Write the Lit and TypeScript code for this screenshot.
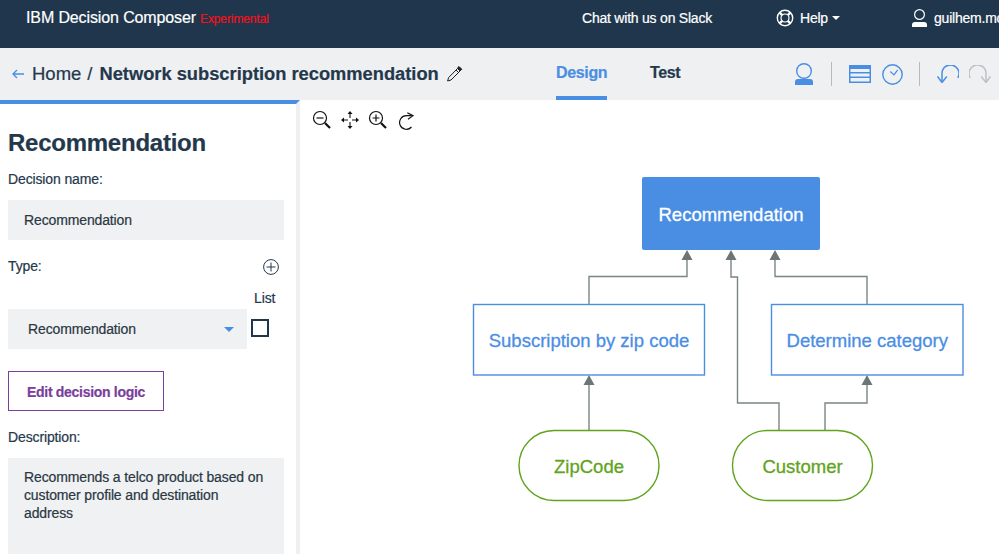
import { LitElement, css, html, svg } from "lit";
import { customElement } from "lit/decorators.js";

const BLUE = "#4a8ee4";
const GREEN = "#5fa41c";

const edges = [
  "M589 304V276.5H687V259",
  "M779 430V403H737.5V277H731V259",
  "M825 430V403H867V385",
  "M867 304V276.5H775V259",
  "M589 430V385",
];
const arrows = [
  [687, 250],
  [731, 250],
  [775, 250],
  [867, 375],
  [589, 375],
];
const boxes = [
  { x: 473.5, y: 304.5, w: 231, h: 70.5, label: "Subscription by zip code" },
  { x: 771.5, y: 304.5, w: 191.5, h: 70.5, label: "Determine category" },
];
const pills = [
  { x: 519, y: 430.5, label: "ZipCode" },
  { x: 732.5, y: 430.5, label: "Customer" },
];

@customElement("app-root")
export class AppRoot extends LitElement {
  private diagram() {
    return svg`
      ${edges.map((d) => svg`<path class="edge" d=${d}></path>`)}
      ${arrows.map(
        ([x, y]) => svg`<path class="head" d="M${x} ${y}l5.5 10h-11z"></path>`
      )}
      <rect x="642" y="177" width="178" height="73" rx="2" fill=${BLUE}></rect>
      <text class="label" x="731" y="220.5" text-anchor="middle" fill="#fff" stroke="#fff">Recommendation</text>
      ${boxes.map(
        (b) => svg`
          <rect class="box" x=${b.x} y=${b.y} width=${b.w} height=${b.h}></rect>
          <text class="label" x=${b.x + b.w / 2} y="346.5" text-anchor="middle" fill=${BLUE} stroke=${BLUE}>${b.label}</text>
        `
      )}
      ${pills.map(
        (p) => svg`
          <rect class="pill" x=${p.x} y=${p.y} width="140" height="70" rx="35"></rect>
          <text class="label" x=${p.x + 70} y="472.5" text-anchor="middle" fill=${GREEN} stroke=${GREEN}>${p.label}</text>
        `
      )}
    `;
  }

  render() {
    return html`
      <header class="topbar">
        <div class="brand">
          <span class="name">IBM Decision Composer</span>
          <span class="exp">Experimental</span>
        </div>
        <div class="top-item">Chat with us on Slack</div>
        <div class="top-item help">
          <svg width="18" height="18" viewBox="0 0 18 18" fill="none" stroke="#fff">
            <circle cx="9" cy="9" r="7.7" stroke-width="1.4"></circle>
            <circle cx="9" cy="9" r="4" stroke-width="1.2"></circle>
            <path d="M3.6 3.6l2.6 2.6M14.4 3.6l-2.6 2.6M3.6 14.4l2.6-2.6M14.4 14.4l-2.6-2.6" stroke-width="2.4"></path>
          </svg>
          <span>Help</span>
          <i class="caret"></i>
        </div>
        <div class="top-item user">
          <svg width="15" height="18" viewBox="0 0 15 18">
            <circle cx="7.5" cy="5.5" r="4.9" fill="none" stroke="#fff" stroke-width="1.2"></circle>
            <path d="M0 18v-2q0-3 3-3h9q3 0 3 3v2z" fill="#fff"></path>
          </svg>
          <span>guilhem.molines</span>
        </div>
      </header>

      <nav class="subbar">
        <div class="crumbs">
          <svg class="back" width="12" height="10" viewBox="0 0 12 10" fill="none" stroke=${BLUE} stroke-width="1.3">
            <path d="M12 5H1M5 1L1 5l4 4"></path>
          </svg>
          <span class="home">Home</span>
          <span class="slash">/</span>
          <b>Network subscription recommendation</b>
          <svg class="pencil" width="18" height="18" viewBox="0 0 18 18" fill="none" stroke="#1f1f1f" stroke-width="1">
            <path d="M12.5 3.5l2.5 2.5L6 15l-3.4 1 1-3.4z"></path>
            <path d="M11 5l2.5 2.5"></path>
            <path d="M14 1.5l2.8 2.8-1.5 1.4-2.8-2.8z" fill="#1f1f1f"></path>
          </svg>
        </div>
        <div class="tab active">Design</div>
        <div class="tab">Test</div>
        <div class="tools">
          <svg width="18" height="22" viewBox="0 0 18 22">
            <circle cx="9" cy="8" r="7.3" fill="none" stroke=${BLUE} stroke-width="1.4"></circle>
            <path d="M0 22v-3q0-3 3-3h12q3 0 3 3v3z" fill=${BLUE}></path>
          </svg>
          <i class="sep first"></i>
          <svg class="table" width="22" height="18" viewBox="0 0 22 18">
            <path d="M0 0h22v18H0z" fill=${BLUE}></path>
            <path d="M1.5 4h19v3h-19zM1.5 8.5h19v3h-19zM1.5 13h19v3.5h-19z" fill="#eff0f2"></path>
          </svg>
          <svg class="clock" width="21" height="21" viewBox="0 0 21 21" fill="none" stroke=${BLUE}>
            <circle cx="10.5" cy="10.5" r="9.7" stroke-width="1.4"></circle>
            <path d="M8.3 7.5l3.7 3.4 3.7-5" stroke-width="1.2"></path>
          </svg>
          <i class="sep second"></i>
          <svg class="undo" width="22" height="18" viewBox="0 0 22 18" fill="none" stroke=${BLUE} stroke-width="1.5">
            <path d="M20.8 12.8A8.5 8.5 0 1 0 5 8.5V17"></path>
            <path d="M.5 11.5l4.5 6 4.8-6"></path>
          </svg>
          <svg class="redo" width="22" height="18" viewBox="0 0 22 18" fill="none" stroke="#b9c3c3" stroke-width="1.5">
            <path d="M1.2 12.8A8.5 8.5 0 1 1 17 8.5V17"></path>
            <path d="M21.5 11.5l-4.5 6-4.8-6"></path>
          </svg>
        </div>
      </nav>

      <main class="main">
        <aside class="side">
          <h1>Recommendation</h1>
          <label class="name-label">Decision name:</label>
          <div class="field name-field">Recommendation</div>
          <div class="type-row">
            <label>Type:</label>
            <svg width="16" height="16" viewBox="0 0 16 16" fill="none" stroke="#24384c">
              <circle cx="8" cy="8" r="7.4"></circle>
              <path d="M8 3.5v9M3.5 8h9"></path>
            </svg>
          </div>
          <div class="list-label">List</div>
          <div class="select-row">
            <div class="field select">
              <span>Recommendation</span>
              <i class="select-caret"></i>
            </div>
            <i class="check"></i>
          </div>
          <button class="edit">Edit decision logic</button>
          <label class="desc-label">Description:</label>
          <div class="field desc">
            Recommends a telco product based on customer profile and destination address
          </div>
        </aside>

        <section class="canvas">
          <div class="zoom-tools">
            <svg width="20" height="20" viewBox="0 0 20 20" fill="none" stroke="#111">
              <circle cx="8" cy="8" r="6.5" stroke-width="1.2"></circle>
              <path d="M4.5 8h7" stroke-width="1.2"></path>
              <path d="M13 13l5 5" stroke-width="2.2"></path>
            </svg>
            <svg width="20" height="20" viewBox="0 0 20 20" fill="none" stroke="#111" stroke-width="1.1">
              <path d="M10 4v4M10 12v4M4 10h4M12 10h4"></path>
              <path d="M10 1l2.5 3h-5zM10 19l2.5-3h-5zM1 10l3-2.5v5zM19 10l-3-2.5v5z" fill="#111" stroke="none"></path>
            </svg>
            <svg width="20" height="20" viewBox="0 0 20 20" fill="none" stroke="#111">
              <circle cx="8" cy="8" r="6.5" stroke-width="1.2"></circle>
              <path d="M4.5 8h7M8 4.5v7" stroke-width="1.2"></path>
              <path d="M13 13l5 5" stroke-width="2.2"></path>
            </svg>
            <svg width="20" height="20" viewBox="0 0 20 20" fill="none" stroke="#111" stroke-width="1.2">
              <path d="M15.5 5.7H10.5A6.8 6.8 0 1 0 15.5 17"></path>
              <path d="M11.3 2.7L17 5.7l-5 3.6"></path>
            </svg>
          </div>
          <svg class="diagram" width="699" height="454" viewBox="300 100 699 454">
            ${this.diagram()}
          </svg>
        </section>
      </main>
    `;
  }

  static styles = css`
    :host {
      display: block;
      width: 999px;
      height: 554px;
      overflow: hidden;
      background: #fff;
      color: #24384c;
      font-family: "Liberation Sans", Arial, sans-serif;
      font-size: 14px;
      -webkit-text-stroke: 0.2px;
    }

    * {
      box-sizing: border-box;
    }

    .topbar {
      display: grid;
      grid-template-columns: 582px 194px 136px 87px;
      height: 48px;
      padding-bottom: 12px;
      align-items: center;
      background: #1f364c;
      color: #fff;
      font-size: 14px;
      letter-spacing: -0.22px;
      white-space: nowrap;
    }

    .brand {
      display: flex;
      align-items: baseline;
      gap: 4px;
      padding-left: 26px;
    }

    .name {
      font-size: 16px;
      letter-spacing: -0.12px;
    }

    .exp {
      color: #f4111b;
      font-size: 12px;
      letter-spacing: -0.1px;
    }

    .top-item {
      display: flex;
      align-items: center;
      overflow: hidden;
    }

    .top-item svg {
      flex: none;
    }

    .help svg {
      margin-right: 6px;
    }

    .caret {
      width: 0;
      height: 0;
      margin-left: 4px;
      border: 4px solid transparent;
      border-top: 4px solid #fff;
      border-bottom: 0;
    }

    .user svg {
      margin-right: 7px;
    }

    .subbar {
      display: grid;
      grid-template-columns: 556px 94px 145px 204px;
      height: 52px;
      align-items: center;
      background: #eff0f2;
      white-space: nowrap;
    }

    .crumbs {
      display: flex;
      align-items: center;
      padding: 0 0 0 12px;
      font-size: 18.5px;
    }

    .back {
      margin-right: 8px;
    }

    .slash {
      margin: 0 7px 0 6px;
    }

    .crumbs b {
      font-size: 18.3px;
    }

    .pencil {
      margin-left: 6px;
    }

    .tab {
      align-self: stretch;
      justify-self: start;
      padding-top: 16px;
      border-bottom: 4px solid transparent;
      font-size: 16px;
      font-weight: 700;
      letter-spacing: -0.35px;
    }

    .tab.active {
      border-bottom-color: #4a8ee4;
      color: #4a8ee4;
    }

    .tools {
      display: flex;
      align-items: center;
    }

    .sep {
      width: 1px;
      height: 24px;
      background: #b4bcbc;
    }

    .sep.first {
      margin: 0 17px 0 18px;
    }

    .clock {
      margin-left: 11px;
    }

    .sep.second {
      margin: 0 17px 0 16px;
    }

    .redo {
      margin-left: 10px;
    }

    .main {
      display: flex;
      height: 454px;
    }

    .side {
      flex: none;
      width: 300px;
      height: 454px;
      padding: 26px 12px 0 8px;
      overflow: hidden;
      border-top: 4px solid #4a8ee4;
      border-right: 4px solid #eff0f2;
      letter-spacing: -0.13px;
    }

    h1 {
      margin: 0;
      font-size: 24px;
      line-height: 26px;
      letter-spacing: -0.25px;
    }

    label {
      display: block;
      line-height: 16px;
    }

    .name-label {
      margin-top: 15px;
    }

    .field {
      background: #f0f1f3;
      color: #2a3742;
    }

    .name-field {
      height: 40px;
      margin-top: 13px;
      padding-left: 16px;
      line-height: 40px;
    }

    .type-row {
      display: flex;
      align-items: center;
      justify-content: space-between;
      height: 16px;
      margin-top: 19px;
      padding-right: 5px;
    }

    .type-row label {
      margin-bottom: 2px;
    }

    .list-label {
      margin-top: 15px;
      padding-left: 246px;
      line-height: 16px;
    }

    .select-row {
      display: flex;
      align-items: center;
      gap: 4px;
      margin-top: 3px;
    }

    .select {
      display: flex;
      align-items: center;
      justify-content: space-between;
      width: 239px;
      height: 40px;
      padding: 0 13px 0 20px;
    }

    .select-caret {
      width: 0;
      height: 0;
      border: 5px solid transparent;
      border-top: 5px solid #4a8ee4;
      border-bottom: 0;
    }

    .check {
      width: 18px;
      height: 18px;
      margin-bottom: 2px;
      border: 2px solid #1f364c;
    }

    .edit {
      display: block;
      width: 156px;
      height: 40px;
      margin-top: 22px;
      padding: 2px 0 0;
      border: 1px solid #7a3e9d;
      background: #fff;
      color: #7a3e9d;
      font: 700 14px "Liberation Sans", Arial, sans-serif;
      letter-spacing: -0.3px;
    }

    .desc-label {
      margin-top: 18px;
    }

    .desc {
      height: 110px;
      margin-top: 13px;
      padding: 10px 16px;
      line-height: 18px;
    }

    .canvas {
      position: relative;
      flex: 1;
      height: 454px;
    }

    .diagram {
      display: block;
    }

    .zoom-tools {
      position: absolute;
      top: 10px;
      left: 12px;
      display: flex;
      gap: 8px;
    }

    .edge {
      fill: none;
      stroke: #7a8585;
      stroke-width: 1.4;
    }

    .head {
      fill: #6d7676;
    }

    .box {
      fill: #fff;
      stroke: #4a8ee4;
      stroke-width: 1.4;
    }

    .pill {
      fill: #fff;
      stroke: #5fa41c;
      stroke-width: 1.4;
    }

    .label {
      font-size: 18.5px;
      stroke-width: 0.3;
    }
  `;
}
